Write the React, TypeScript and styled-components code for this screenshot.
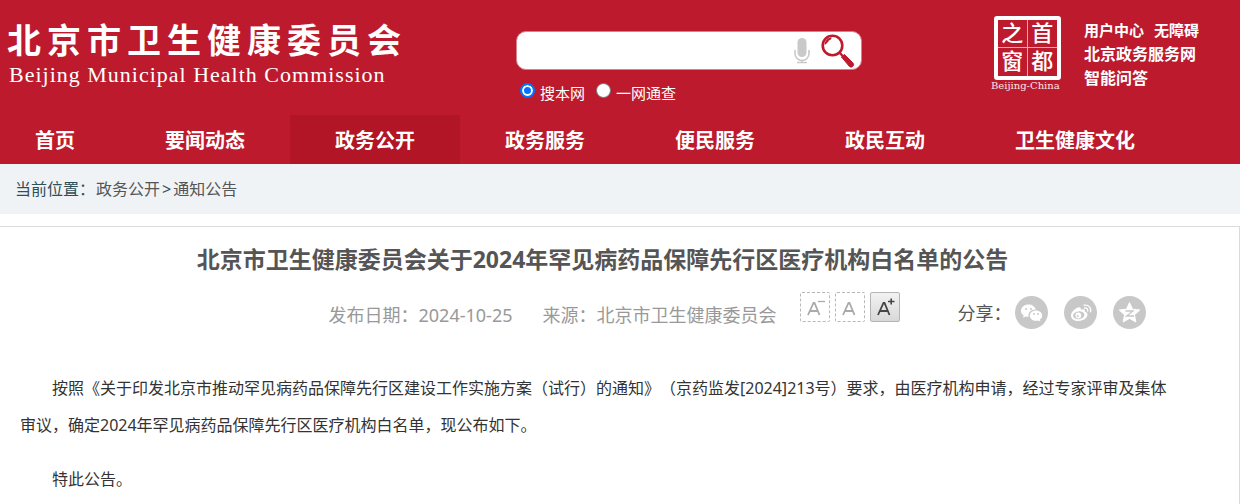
import React from "react";
import styled, { createGlobalStyle, css } from "styled-components";

const GlobalStyle = createGlobalStyle`
  *, *::before, *::after { box-sizing: border-box; }
  body {
    margin: 0;
    background: #fff;
    color: #333;
    font: 16px/24px "Noto Sans", "Noto Sans CJK SC", sans-serif;
    text-spacing-trim: space-all;
  }
  a { color: inherit; text-decoration: none; }
  h1, p { margin: 0; }
`;

const Page = styled.div`
  display: flex;
  flex-direction: column;
  min-height: 100vh;
`;

const Header = styled.header`
  background: #bd1a2d;
  color: #fff;
`;

const Masthead = styled.div`
  display: flex;
  align-items: flex-start;
  height: 115px;
  padding-left: 7px;
`;

const Brand = styled.a`
  flex: 0 0 509px;
  padding-top: 20px;
  white-space: nowrap;
`;

const BrandName = styled.span`
  display: block;
  font-size: 34px;
  line-height: 40px;
  font-weight: 700;
  letter-spacing: 6px;
`;

const BrandLatin = styled.span`
  display: block;
  padding-left: 2px;
  font: 22px/30px "Liberation Serif", serif;
  letter-spacing: 1px;
`;

const SearchForm = styled.form`
  flex: 0 0 346px;
  padding-top: 31px;
`;

const SearchBox = styled.div`
  display: flex;
  align-items: center;
  height: 39px;
  padding-right: 6px;
  border: 1px solid #d8808b;
  border-radius: 10px;
  background: #fff;
`;

const SearchInput = styled.input`
  flex: 1;
  min-width: 0;
  height: 36px;
  padding: 0 12px;
  border: 0;
  background: transparent;
  font: inherit;
  outline: none;
`;

const IconButton = styled.button`
  display: flex;
  padding: 0;
  border: 0;
  background: none;
  cursor: pointer;
`;

const MicButton = styled(IconButton)`
  margin-right: 11px;
`;

const Scopes = styled.div`
  display: flex;
  gap: 11px;
  padding: 12px 0 0 4px;
`;

const Scope = styled.label`
  display: flex;
  align-items: flex-start;
  gap: 5px;
  font-size: 15px;
  line-height: 22px;
`;

const Radio = styled.input`
  width: 15px;
  height: 15px;
  margin: 1px 0 0;
  appearance: none;
  border: 1px solid #767676;
  border-radius: 50%;
  background: #fff;
  &:checked {
    border: 2px solid #0075ff;
    background: #0075ff;
    box-shadow: inset 0 0 0 2px #fff;
  }
`;

const CapitalWindow = styled.a`
  margin-left: 128px;
  padding-top: 16px;
  width: 76px;
`;

const Seal = styled.span`
  display: grid;
  grid-template-columns: 1fr 1fr;
  grid-template-rows: 1fr 1fr;
  width: 67px;
  height: 64px;
  margin-left: 4px;
  border: 4px solid #fff;
  border-radius: 3px;
`;

const SealCell = styled.span<{ $right?: boolean; $bottom?: boolean }>`
  text-align: center;
  font: 500 22px/27px "Liberation Sans", "Noto Sans CJK SC", sans-serif;
  ${(p) => !p.$right && css`border-right: 1px solid #e9a9b0;`}
  ${(p) => !p.$bottom && css`border-bottom: 1px solid #e9a9b0;`}
`;

const SealCaption = styled.span`
  display: block;
  padding-left: 1px;
  font: 10px/12px "DejaVu Serif", serif;
  color: #fbe6e9;
  white-space: nowrap;
`;

const QuickLinks = styled.nav`
  display: grid;
  margin-left: 18px;
  padding-top: 18px;
  font-size: 16px;
  line-height: 24px;
  font-weight: 700;
`;

const QuickRow = styled.div`
  display: flex;
  gap: 10px;
  font-size: 15px;
`;

const MainNav = styled.nav`
  display: flex;
`;

const NavItem = styled.a<{ $active?: boolean }>`
  padding: 2px 45px 0;
  font-size: 20px;
  line-height: 47px;
  font-weight: 700;
  white-space: nowrap;
  background: ${(p) => (p.$active ? "#b11526" : "transparent")};
  &:first-child { padding-left: 35px; }
`;

const Breadcrumb = styled.nav`
  display: flex;
  padding: 0 15px;
  background: #eff3f6;
  color: #555;
  line-height: 50px;
`;

const BreadcrumbLabel = styled.span`
  margin-right: 1px;
  color: #2f4f58;
`;

const Separator = styled.span`
  padding: 0 2px;
  color: #2f4f58;
`;

const Article = styled.article`
  flex: 1;
  margin-top: 12px;
  padding: 15px 20px 0;
  border-top: 1px solid #d8dcdf;
  border-right: 1px solid #d8dcdf;
`;

const Title = styled.h1`
  padding-right: 34px;
  color: #555;
  font-size: 23px;
  line-height: 34px;
  text-align: center;
`;

const Meta = styled.div`
  display: flex;
  align-items: flex-start;
  justify-content: center;
  height: 63px;
  padding: 16px 0 0 236px;
  color: #999;
  font-size: 18px;
  line-height: 46px;
  white-space: nowrap;
`;

const Published = styled.span`
  margin-right: 30px;
`;

const Source = styled.span`
  margin-right: 24px;
`;

const SizeButtons = styled.div`
  display: flex;
  gap: 5px;
`;

const SizeButton = styled.button<{ $active?: boolean }>`
  display: flex;
  width: 30px;
  height: 30px;
  padding: 0;
  border: 1px dashed #b8b8b8;
  border-radius: 2px;
  background: #fff;
  color: #aaa;
  ${(p) =>
    p.$active &&
    css`
      border: 1px solid #b4b4b4;
      background: linear-gradient(#f2f2f2, #d8d8d8);
      color: #444;
    `}
`;

const Share = styled.div`
  display: flex;
  align-items: center;
  gap: 16px;
  margin: 4px 0 0 57px;
  height: 33px;
  color: #555;
`;

const ShareLabel = styled.span`
  margin-right: -12px;
`;

const Body = styled.div`
  padding: 31px 40px 0 0;
  line-height: 37px;
`;

const Paragraph = styled.p`
  text-indent: 2em;
  & + & { margin-top: 17px; }
`;

const navItems = ["首页", "要闻动态", "政务公开", "政务服务", "便民服务", "政民互动", "卫生健康文化"];

const MicIcon = () => (
  <svg width="16" height="26" viewBox="0 0 16 26" aria-hidden="true">
    <rect x="3.500" y="0" width="9" height="19" rx="4.5" fill="#c9c9c9" />
    <path d="M1 12v3.500a7 7 0 0 0 14 0V12M8 22v3M3 24.500h10" fill="none" stroke="#c9c9c9" strokeWidth="1.6" />
  </svg>
);

const SearchIcon = () => (
  <svg width="34" height="34" viewBox="0 0 34 34" aria-hidden="true">
    <circle cx="11.500" cy="11.500" r="9.800" fill="none" stroke="#bd1a2d" strokeWidth="2.600" />
    <path d="M3.500 11a8 8 0 0 1 7-7.800c.3 2-1.200 2.600-2.600 3.300-.8 1.500-2 3.300-4.400 4.500z" fill="#bd1a2d" />
    <path d="M18.500 18.500l4 4.500" stroke="#bd1a2d" strokeWidth="2.400" />
    <path d="M20.500 23l3-2.500 8.300 8.300a2 2 0 0 1-3.500 3.500z" fill="#bd1a2d" stroke="#bd1a2d" strokeWidth="1" strokeLinejoin="round" />
  </svg>
);

const LetterIcon = ({ sign }: { sign?: "minus" | "plus" }) => (
  <svg width="28" height="28" viewBox="0 0 28 28" fill="none" stroke="currentColor" aria-hidden="true">
    <path d="M7 22L12.500 10h1L18.500 22M9 18h7.500" strokeWidth="1.800" />
    {sign === "minus" && <path d="M17 8.500h7" strokeWidth="1.300" />}
    {sign === "plus" && <path d="M17 8.500h6.500M20.200 5.500v6" strokeWidth="1.600" />}
  </svg>
);

const WechatIcon = () => (
  <svg width="33" height="33" viewBox="0 0 33 33" aria-hidden="true">
    <circle cx="16.500" cy="16.500" r="16.500" fill="#c8c8c8" />
    <path d="M13.500 8.500c-4.200 0-7.500 2.700-7.500 6.200 0 2 1 3.600 2.700 4.800L8 21.800l2.700-1.400c1 .3 1.900.4 2.900.4-.9-4.200 2.500-7.200 7.200-7.200-.8-3-3.700-5.100-7.300-5.100z" fill="#fff" />
    <path d="M21 14.600c-3.500 0-6.200 2.300-6.200 5.100s2.700 5.100 6.200 5.100c.8 0 1.600-.1 2.300-.4l2.100 1.200-.5-2c1.400-1 2.300-2.400 2.300-3.900 0-2.800-2.700-5.100-6.200-5.100z" fill="#fff" />
    <g fill="#c8c8c8"><circle cx="11" cy="13" r="1" /><circle cx="16" cy="13" r="1" /><circle cx="19" cy="18" r=".9" /><circle cx="23" cy="18" r=".9" /></g>
  </svg>
);

const WeiboIcon = () => (
  <svg width="33" height="33" viewBox="0 0 33 33" aria-hidden="true">
    <circle cx="16.500" cy="16.500" r="16.500" fill="#c8c8c8" />
    <path d="M14 11.500c1.700-.7 3.400 0 2.800 2.300 2.200-1 4.700-.7 4 1.700 1.700.5 2.700 1.500 2.700 3.100 0 3.200-3.900 6.400-8.700 6.400S7 22.600 7 19.400c0-3 3.600-6.700 7-7.900z" fill="#fff" />
    <ellipse cx="14.700" cy="19.300" rx="5.700" ry="3.900" fill="#c8c8c8" transform="rotate(-8 14.700 19.300)" />
    <circle cx="14.300" cy="19.500" r="2.900" fill="#fff" />
    <circle cx="13.700" cy="20" r="1.100" fill="#c8c8c8" />
    <path d="M20 9.200c4.300-.9 7.700 2.400 6.500 6.700M20.500 12c2.200-.4 3.800 1.100 3.200 3.200" fill="none" stroke="#fff" strokeWidth="1.300" strokeLinecap="round" />
  </svg>
);

const QzoneIcon = () => (
  <svg width="33" height="33" viewBox="0 0 33 33" aria-hidden="true">
    <circle cx="16.500" cy="16.500" r="16.500" fill="#c8c8c8" />
    <path d="M16.500 6.500l3 6.700 7.300.8-5.400 4.900 1.500 7.100-6.400-3.600-6.400 3.600 1.500-7.100L6.200 14l7.300-.8z" fill="#fff" stroke="#fff" strokeLinejoin="round" />
    <path d="M12.500 15h7.500l-6.500 5h7.500" fill="none" stroke="#c8c8c8" strokeWidth="1.300" />
  </svg>
);

export default function App() {
  return (
    <Page>
      <GlobalStyle />
      <Header>
        <Masthead>
          <Brand href="#">
            <BrandName>北京市卫生健康委员会</BrandName>
            <BrandLatin>Beijing Municipal Health Commission</BrandLatin>
          </Brand>
          <SearchForm onSubmit={(e) => e.preventDefault()}>
            <SearchBox>
              <SearchInput type="text" aria-label="搜索" />
              <MicButton type="button" aria-label="语音"><MicIcon /></MicButton>
              <IconButton type="submit" aria-label="搜索"><SearchIcon /></IconButton>
            </SearchBox>
            <Scopes>
              <Scope><Radio type="radio" name="scope" defaultChecked />搜本网</Scope>
              <Scope><Radio type="radio" name="scope" />一网通查</Scope>
            </Scopes>
          </SearchForm>
          <CapitalWindow href="#">
            <Seal>
              <SealCell>之</SealCell>
              <SealCell $right>首</SealCell>
              <SealCell $bottom>窗</SealCell>
              <SealCell $right $bottom>都</SealCell>
            </Seal>
            <SealCaption>Beijing-China</SealCaption>
          </CapitalWindow>
          <QuickLinks>
            <QuickRow><a href="#">用户中心</a><a href="#">无障碍</a></QuickRow>
            <a href="#">北京政务服务网</a>
            <a href="#">智能问答</a>
          </QuickLinks>
        </Masthead>
        <MainNav>
          {navItems.map((item) => (
            <NavItem key={item} href="#" $active={item === "政务公开"}>{item}</NavItem>
          ))}
        </MainNav>
      </Header>
      <Breadcrumb>
        <BreadcrumbLabel>当前位置：</BreadcrumbLabel>
        <a href="#">政务公开</a>
        <Separator>&gt;</Separator>
        <a href="#">通知公告</a>
      </Breadcrumb>
      <Article>
        <Title>北京市卫生健康委员会关于2024年罕见病药品保障先行区医疗机构白名单的公告</Title>
        <Meta>
          <Published>发布日期：2024-10-25</Published>
          <Source>来源：北京市卫生健康委员会</Source>
          <SizeButtons>
            <SizeButton type="button" aria-label="缩小字号"><LetterIcon sign="minus" /></SizeButton>
            <SizeButton type="button" aria-label="默认字号"><LetterIcon /></SizeButton>
            <SizeButton type="button" aria-label="放大字号" $active><LetterIcon sign="plus" /></SizeButton>
          </SizeButtons>
          <Share>
            <ShareLabel>分享：</ShareLabel>
            <IconButton type="button" aria-label="微信"><WechatIcon /></IconButton>
            <IconButton type="button" aria-label="微博"><WeiboIcon /></IconButton>
            <IconButton type="button" aria-label="QQ空间"><QzoneIcon /></IconButton>
          </Share>
        </Meta>
        <Body>
          <Paragraph>
            按照《关于印发北京市推动罕见病药品保障先行区建设工作实施方案（试行）的通知》（京药监发[2024]213号）要求，由医疗机构申请，经过专家评审及集体审议，确定2024年罕见病药品保障先行区医疗机构白名单，现公布如下。
          </Paragraph>
          <Paragraph>特此公告。</Paragraph>
        </Body>
      </Article>
    </Page>
  );
}
